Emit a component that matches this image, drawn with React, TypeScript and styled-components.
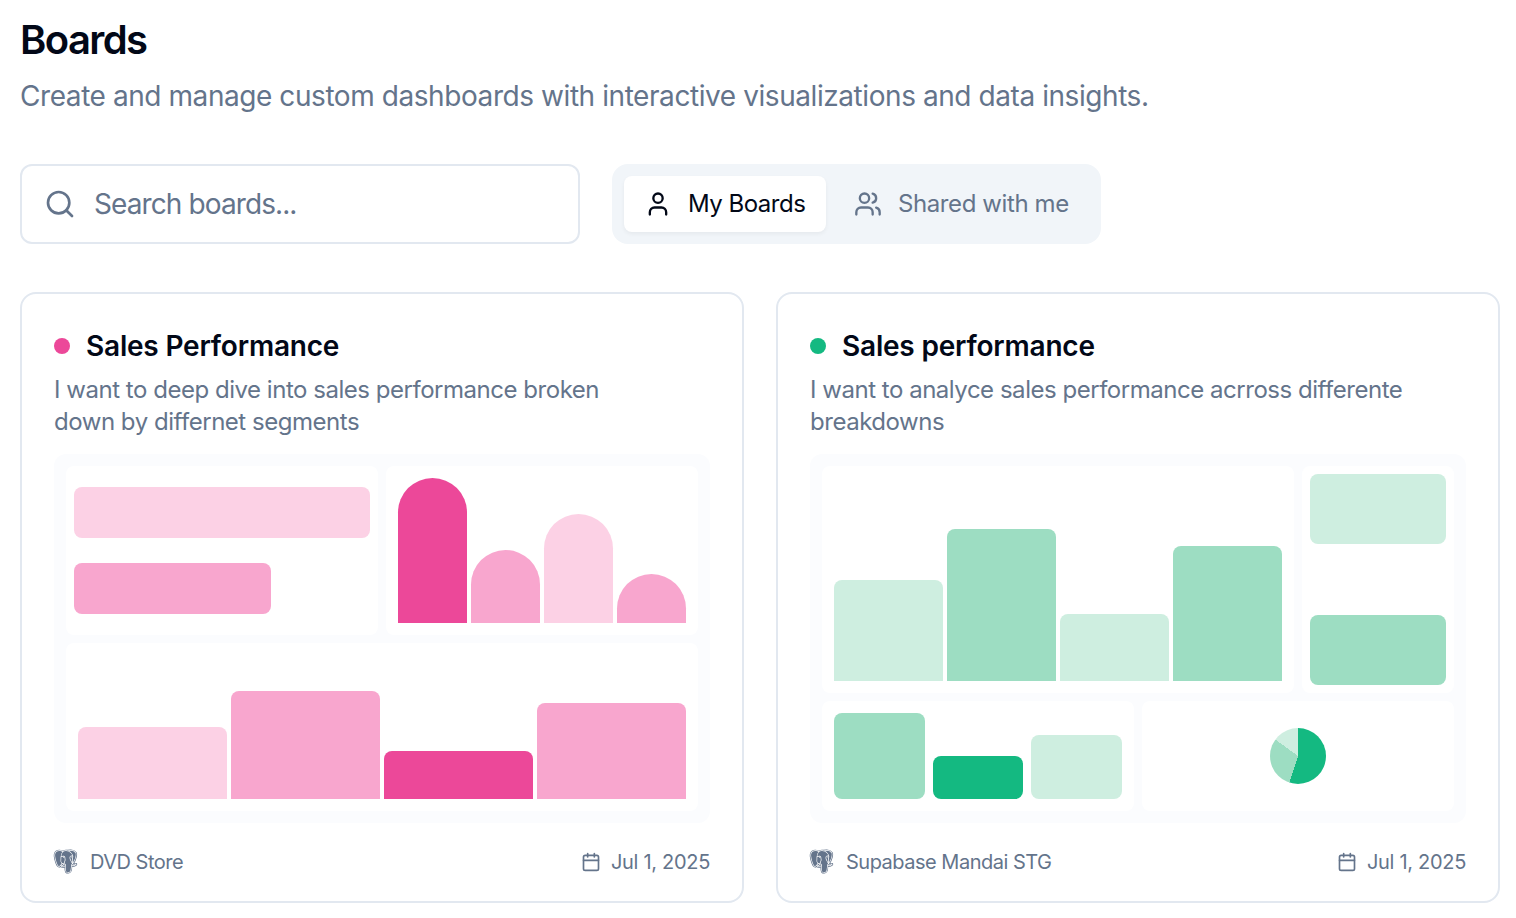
import styled, { createGlobalStyle } from "styled-components";
import { Calendar, Search, User, Users } from "lucide-react";
import { BiLogoPostgresql } from "react-icons/bi";

type Shade = "light" | "mid" | "full";
type Palette = Record<Shade, string>;
type BarData = { size: number; shade: Shade };

const pink: Palette = { light: "#fcd1e5", mid: "#f8a6ce", full: "#ec4899" };
const green: Palette = { light: "#ceeee0", mid: "#9dddc2", full: "#14b981" };

const App = () => (
  <>
    <GlobalStyle />
    <Page>
      <Title>Boards</Title>
      <Subtitle>
        Create and manage custom dashboards with interactive visualizations and data insights.
      </Subtitle>
      <Toolbar>
        <SearchBox>
          <Search size={32} strokeWidth={2} />
          <SearchInput placeholder="Search boards..." />
        </SearchBox>
        <Tabs>
          <Tab $active $width={202} $spacing="-0.5px">
            <User size={28} />
            <span>My Boards</span>
          </Tab>
          <Tab $width={255} $spacing="-0.4px">
            <Users size={28} />
            <span>Shared with me</span>
          </Tab>
        </Tabs>
      </Toolbar>
      <Boards>
        <BoardCard
          name="Sales Performance"
          description={["I want to deep dive into sales performance broken", "down by differnet segments"]}
          source="DVD Store"
          date="Jul 1, 2025"
          color={pink.full}
        >
          <PinkPreview />
        </BoardCard>
        <BoardCard
          name="Sales performance"
          description={["I want to analyce sales performance acrross differente", "breakdowns"]}
          source="Supabase Mandai STG"
          date="Jul 1, 2025"
          color={green.full}
        >
          <GreenPreview />
        </BoardCard>
      </Boards>
    </Page>
  </>
);

export default App;

const BoardCard = ({
  name,
  description,
  source,
  date,
  color,
  children,
}: {
  name: string;
  description: string[];
  source: string;
  date: string;
  color: string;
  children: React.ReactNode;
}) => (
  <Card>
    <CardHeader>
      <Dot $color={color} />
      <CardTitle>{name}</CardTitle>
    </CardHeader>
    <Description>
      {description.map((line) => (
        <div key={line}>{line}</div>
      ))}
    </Description>
    {children}
    <CardFooter>
      <Meta $gap={12} $spacing="-0.5px">
        <SourceIcon size={29} />
        <span>{source}</span>
      </Meta>
      <Meta $gap={10} $spacing="-0.3px">
        <Calendar size={20} />
        <span>{date}</span>
      </Meta>
    </CardFooter>
  </Card>
);

const Bars = ({
  data,
  palette,
  gap,
  radius,
}: {
  data: BarData[];
  palette: Palette;
  gap: number;
  radius: string;
}) => (
  <BarRow $gap={gap}>
    {data.map((bar, i) => (
      <Bar key={i} $color={palette[bar.shade]} $radius={radius} style={{ height: `${bar.size}%` }} />
    ))}
  </BarRow>
);

const PinkPreview = () => (
  <Preview $columns={2} $rows={2}>
    <Tile $padding={8}>
      <Stack $justify="space-around">
        <Block $color={pink.light} style={{ width: "100%" }} />
        <Block $color={pink.mid} style={{ width: "66.6667%" }} />
      </Stack>
    </Tile>
    <Tile>
      <Bars
        palette={pink}
        gap={4}
        radius="999px 999px 0 0"
        data={[
          { size: 100, shade: "full" },
          { size: 50, shade: "mid" },
          { size: 75, shade: "light" },
          { size: 33.3333, shade: "mid" },
        ]}
      />
    </Tile>
    <Tile $cols={2}>
      <Bars
        palette={pink}
        gap={4}
        radius="8px 8px 0 0"
        data={[
          { size: 50, shade: "light" },
          { size: 75, shade: "mid" },
          { size: 33.3333, shade: "full" },
          { size: 66.6667, shade: "mid" },
        ]}
      />
    </Tile>
  </Preview>
);

const GreenPreview = () => (
  <Preview $columns={4} $rows={3}>
    <Tile $cols={3} $rows={2}>
      <Bars
        palette={green}
        gap={4}
        radius="8px 8px 0 0"
        data={[
          { size: 50, shade: "light" },
          { size: 75, shade: "mid" },
          { size: 33.3333, shade: "light" },
          { size: 66.6667, shade: "mid" },
        ]}
      />
    </Tile>
    <Tile $padding={8} $rows={2}>
      <Stack $justify="space-between">
        <Block $color={green.light} style={{ width: "100%" }} />
        <Block $color={green.mid} style={{ width: "100%" }} />
      </Stack>
    </Tile>
    <Tile $cols={2}>
      <Bars
        palette={green}
        gap={8}
        radius="8px"
        data={[
          { size: 100, shade: "mid" },
          { size: 50, shade: "full" },
          { size: 75, shade: "light" },
        ]}
      />
    </Tile>
    <Tile $cols={2} $centered>
      <Pie />
    </Tile>
  </Preview>
);

const GlobalStyle = createGlobalStyle`
  * {
    box-sizing: border-box;
  }

  body {
    margin: 0;
    background: #fff;
    color: #020817;
    font-family: Inter, "Liberation Sans", sans-serif;
    -webkit-font-smoothing: antialiased;
  }
`;

const Page = styled.main`
  padding: 20px 16px 15px 20px;
`;

const Title = styled.h1`
  margin: 0;
  font-size: 40px;
  line-height: 40px;
  font-weight: 600;
  letter-spacing: -1.6px;
`;

const Subtitle = styled.p`
  margin: 16px 0 0;
  font-size: 28px;
  line-height: 40px;
  letter-spacing: -0.43px;
  color: #64748b;
  white-space: nowrap;
`;

const Toolbar = styled.div`
  display: flex;
  gap: 32px;
  margin-top: 48px;
`;

const SearchBox = styled.label`
  display: flex;
  align-items: center;
  gap: 18px;
  width: 560px;
  height: 80px;
  padding: 0 22px;
  border: 2px solid #e2e8f0;
  border-radius: 12px;
  color: #64748b;
`;

const SearchInput = styled.input`
  flex: 1;
  min-width: 0;
  padding: 0;
  border: 0;
  outline: 0;
  background: transparent;
  font: inherit;
  font-size: 28px;
  letter-spacing: -0.9px;
  color: #020817;

  &::placeholder {
    color: #64748b;
  }
`;

const Tabs = styled.div`
  display: flex;
  gap: 8px;
  width: 489px;
  height: 80px;
  padding: 12px;
  border-radius: 16px;
  background: #f1f5f9;
`;

const Tab = styled.button<{ $active?: boolean; $width: number; $spacing: string }>`
  display: flex;
  flex: none;
  align-items: center;
  gap: 16px;
  width: ${({ $width }) => $width}px;
  height: 56px;
  padding: 0 20px;
  border: 0;
  border-radius: 8px;
  background: ${({ $active }) => ($active ? "#fff" : "transparent")};
  box-shadow: ${({ $active }) => ($active ? "0 2px 4px rgba(0, 0, 0, 0.05)" : "none")};
  color: ${({ $active }) => ($active ? "#020817" : "#64748b")};
  font-family: inherit;
  font-size: 24px;
  line-height: 32px;
  letter-spacing: ${({ $spacing }) => $spacing};
  white-space: nowrap;

  svg {
    flex: none;
  }
`;

const Boards = styled.section`
  display: grid;
  grid-template-columns: repeat(2, 724px);
  gap: 32px;
  margin-top: 48px;
`;

const Card = styled.article`
  height: 611px;
  padding: 32px 32px 0;
  border: 2px solid #e2e8f0;
  border-radius: 16px;
`;

const CardHeader = styled.div`
  display: flex;
  align-items: center;
  gap: 16px;
  height: 40px;
`;

const Dot = styled.span<{ $color: string }>`
  width: 16px;
  height: 16px;
  border-radius: 50%;
  background: ${({ $color }) => $color};
`;

const CardTitle = styled.h3`
  margin: 0;
  font-size: 28px;
  line-height: 40px;
  font-weight: 600;
  letter-spacing: -0.2px;
`;

const Description = styled.div`
  margin: 8px 0 16px;
  font-size: 24px;
  line-height: 32px;
  letter-spacing: -0.47px;
  color: #64748b;
  white-space: nowrap;
`;

const Preview = styled.div<{ $columns: number; $rows: number }>`
  display: grid;
  grid-template-columns: repeat(${({ $columns }) => $columns}, minmax(0, 1fr));
  grid-template-rows: repeat(${({ $rows }) => $rows}, minmax(0, 1fr));
  gap: 8px;
  height: 369px;
  padding: 12px;
  border-radius: 12px;
  background: #fbfcfe;
`;

const Tile = styled.div<{ $cols?: number; $rows?: number; $padding?: number; $centered?: boolean }>`
  display: flex;
  align-items: ${({ $centered }) => ($centered ? "center" : "stretch")};
  justify-content: center;
  grid-column: span ${({ $cols = 1 }) => $cols};
  grid-row: span ${({ $rows = 1 }) => $rows};
  padding: ${({ $padding = 12 }) => $padding}px;
  border-radius: 8px;
  background: #fff;
`;

const BarRow = styled.div<{ $gap: number }>`
  display: flex;
  flex: 1;
  align-items: flex-end;
  gap: ${({ $gap }) => $gap}px;
`;

const Bar = styled.div<{ $color: string; $radius: string }>`
  flex: 1;
  border-radius: ${({ $radius }) => $radius};
  background: ${({ $color }) => $color};
`;

const Stack = styled.div<{ $justify: string }>`
  display: flex;
  flex: 1;
  flex-direction: column;
  justify-content: ${({ $justify }) => $justify};
`;

const Block = styled.div<{ $color: string }>`
  height: 33.3333%;
  border-radius: 8px;
  background: ${({ $color }) => $color};
`;

const Pie = styled.div`
  width: 56px;
  height: 56px;
  border-radius: 50%;
  background: conic-gradient(
    ${green.full} 0 55%,
    ${green.mid} 55% 85%,
    ${green.light} 85% 100%
  );
`;

const CardFooter = styled.div`
  display: flex;
  align-items: center;
  justify-content: space-between;
  margin-top: 23px;
  height: 32px;
  font-size: 20px;
  line-height: 32px;
  color: #64748b;
`;

const Meta = styled.div<{ $gap: number; $spacing: string }>`
  display: flex;
  align-items: center;
  gap: ${({ $gap }) => $gap}px;
  letter-spacing: ${({ $spacing }) => $spacing};
`;

// the glyph has its own inner margin, so pull the box in to a 24px footprint
const SourceIcon = styled(BiLogoPostgresql)`
  margin: -3px -2px -2px -3px;
`;
